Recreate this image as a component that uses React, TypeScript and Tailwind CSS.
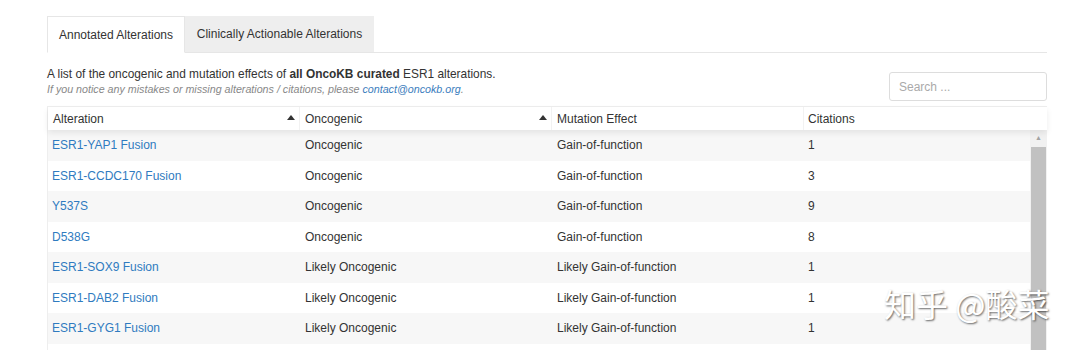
const rows = [
  { alt: 'ESR1-YAP1 Fusion', onc: 'Oncogenic', eff: 'Gain-of-function', cit: '1' },
  { alt: 'ESR1-CCDC170 Fusion', onc: 'Oncogenic', eff: 'Gain-of-function', cit: '3' },
  { alt: 'Y537S', onc: 'Oncogenic', eff: 'Gain-of-function', cit: '9' },
  { alt: 'D538G', onc: 'Oncogenic', eff: 'Gain-of-function', cit: '8' },
  { alt: 'ESR1-SOX9 Fusion', onc: 'Likely Oncogenic', eff: 'Likely Gain-of-function', cit: '1' },
  { alt: 'ESR1-DAB2 Fusion', onc: 'Likely Oncogenic', eff: 'Likely Gain-of-function', cit: '1' },
  { alt: 'ESR1-GYG1 Fusion', onc: 'Likely Oncogenic', eff: 'Likely Gain-of-function', cit: '1' },
  { alt: '', onc: '', eff: '', cit: '' },
]

function SortArrow() {
  return (
    <svg width="8" height="5" viewBox="0 0 8 5" className="mr-[4px] mb-[3px]">
      <path d="M0 5 L4 0 L8 5 Z" fill="#333" />
    </svg>
  )
}

export default function App() {
  return (
    <div className="relative h-[350px] w-[1080px] overflow-hidden bg-white text-[#333] font-['Liberation_Sans',Arial,sans-serif]">
      <div className="ml-[47px] w-[1000px] pt-[16px]">
        {/* tabs */}
        <div className="flex h-[37px] border-b border-[#e6e6e6]">
          <div className="flex items-center h-[37px] w-[138px] justify-center text-[12px] bg-white border border-[#e6e6e6] border-b-white">
            Annotated Alterations
          </div>
          <div className="flex items-center h-[36px] w-[189px] justify-center text-[12px] bg-[#eeeeee]">
            Clinically Actionable Alterations
          </div>
        </div>

        {/* description + search */}
        <div className="flex items-start justify-between mt-[13px]">
          <div>
            <p className="text-[11.9px] leading-[16px]">
              A list of the oncogenic and mutation effects of <b>all OncoKB curated</b> ESR1 alterations.
            </p>
            <p className="text-[10.7px] leading-[14px] italic text-[#888]">
              If you notice any mistakes or missing alterations / citations, please{' '}
              <span className="text-[#3b7dbd]">contact@oncokb.org</span>.
            </p>
          </div>
          <div className="mt-[6px] w-[158px] h-[29px] border border-[#ddd] rounded-[3px] flex items-center px-[9px] text-[12px] text-[#aaa]">
            Search ...
          </div>
        </div>

        {/* table */}
        <div className="mt-[5px] border-l border-t border-[#eeeeee]">
          <div className="flex h-[23px] items-center text-[12px] shadow-[0_3px_6px_rgba(0,0,0,0.08)] relative z-10 bg-white">
            <div className="w-[252px] flex items-center justify-between pl-[5px] border-r border-[#f2f2f2] h-full">
              <span>Alteration</span>
              <SortArrow />
            </div>
            <div className="w-[252px] flex items-center justify-between pl-[5px] border-r border-[#f2f2f2] h-full">
              <span>Oncogenic</span>
              <SortArrow />
            </div>
            <div className="w-[252px] flex items-center pl-[5px] border-r border-[#f2f2f2] h-full">
              <span>Mutation Effect</span>
            </div>
            <div className="flex-1 flex items-center pl-[4px] h-full">
              <span>Citations</span>
            </div>
          </div>

          <div className="flex">
            <div className="flex-1">
              {rows.map((r, i) => (
                <div
                  key={i}
                  className={`flex h-[30.5px] items-center text-[12px] ${i % 2 === 0 ? 'bg-[#f7f7f7]' : 'bg-white'}`}
                >
                  <div className="w-[252px] pl-[4px] text-[#2f7bc0]">{r.alt}</div>
                  <div className="w-[252px] pl-[5px]">{r.onc}</div>
                  <div className="w-[252px] pl-[5px]">{r.eff}</div>
                  <div className="flex-1 pl-[4px]">{r.cit}</div>
                </div>
              ))}
            </div>
            <div className="w-[17px] bg-[#f1f1f1] flex flex-col items-center">
              <div className="h-[17px] flex items-center justify-center text-[7px] text-[#a3a3a3]">▲</div>
              <div className="w-[15px] flex-1 bg-[#c1c1c1]" />
            </div>
          </div>
        </div>
      </div>

      {/* watermark */}
      <div className="absolute left-[884px] top-[287px] text-[32px] leading-none tracking-[0px] text-white [text-shadow:1px_1px_2px_rgba(0,0,0,0.6)] font-['Noto_Sans_CJK_SC',sans-serif]">
        知乎 @酸菜
      </div>
    </div>
  )
}
